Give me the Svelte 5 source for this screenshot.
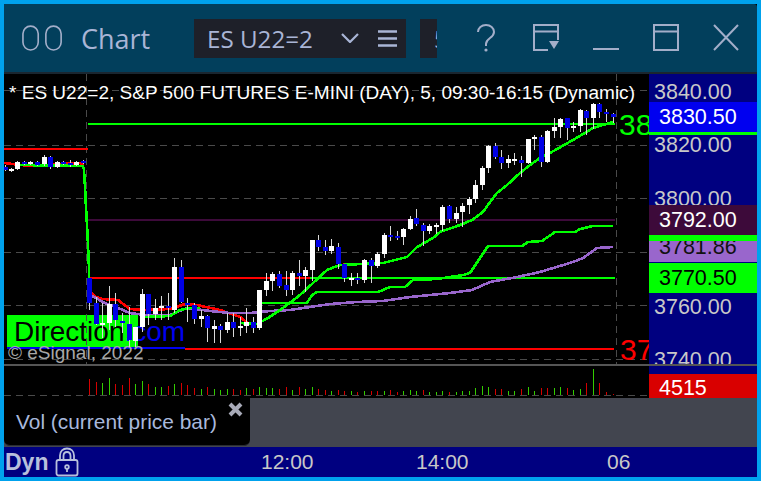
<script>
  // [x, kind (w/b), bodyTop, bodyBottom, wickTop, wickBottom]
  const candles = [
    [5,'b',167,170,165,171],[11,'w',169,171,168,172],[17,'w',162,169,161,170],[24,'b',162,164,161,165],
    [30,'w',162,164,161,165],[37,'b',162,165,161,166],[44,'w',157,164,155,166],[50,'b',157,167,156,169],
    [57,'w',162,167,161,168],[63,'b',162,164,161,165],[70,'b',163,165,160,167],[76,'w',162,165,161,166],
    [83,'b',161,163,160,164],
    [89,'b',278,303,278,310],[96,'b',303,324,297,325],[102,'w',323,325,303,338],[109,'w',304,323,286,330],
    [115,'b',304,320,293,327],[122,'b',321,323,313,333],[129,'b',324,340,307,347],[135,'w',327,341,327,347],
    [142,'w',294,327,289,332],[148,'b',294,314,294,325],[155,'w',308,314,299,320],[161,'w',306,308,296,320],
    [168,'b',306,308,293,320],[174,'w',267,310,258,313],[181,'b',267,302,260,303],[187,'b',303,305,298,322],
    [194,'b',305,319,303,324],[201,'w',316,319,310,327],[207,'b',316,328,315,342],[214,'w',326,329,320,343],
    [220,'b',326,330,324,343],[227,'w',322,330,313,333],[233,'b',322,328,313,337],[240,'w',326,328,317,336],
    [246,'w',322,326,308,333],[253,'b',322,328,317,333],[259,'w',290,328,290,330],[266,'w',281,290,273,296],
    [272,'w',274,281,272,291],[279,'b',274,286,271,288],[286,'b',285,290,271,296],[292,'w',273,290,271,295],
    [299,'b',273,276,260,286],[305,'w',270,276,267,292],[312,'w',240,270,240,281],[318,'b',240,247,235,251],
    [325,'b',247,251,240,255],[331,'w',246,251,239,254],[338,'b',247,264,243,269],[344,'b',264,278,264,282],
    [351,'w',278,280,273,286],[357,'b',278,280,273,284],[364,'w',260,280,259,283],[371,'b',260,266,258,283],
    [377,'w',254,266,252,268],[384,'w',235,254,233,258],[390,'b',235,237,226,241],[397,'b',236,238,231,240],
    [403,'w',229,237,228,245],[410,'w',219,229,216,230],[416,'b',218,224,209,226],[423,'b',225,231,223,246],
    [429,'w',226,231,224,234],[436,'w',225,227,223,234],[442,'w',207,225,205,231],[449,'b',206,219,205,223],
    [456,'w',213,219,207,223],[462,'w',206,212,203,227],[469,'w',199,205,197,214],[475,'w',185,199,180,203],
    [482,'w',168,185,166,190],[488,'w',146,168,145,173],[495,'b',146,157,143,159],[501,'b',157,163,150,169],
    [508,'w',159,163,155,168],[514,'w',159,161,153,165],[521,'b',160,163,156,177],[528,'w',139,163,139,164],
    [534,'w',137,139,135,150],[541,'b',137,162,135,167],[547,'w',131,162,130,163],[554,'w',127,131,118,138],
    [560,'w',119,127,118,138],[567,'b',118,128,118,140],[573,'w',126,128,122,132],[580,'w',110,126,109,132],
    [586,'b',111,118,110,135],[593,'w',104,118,103,129],[599,'b',104,112,103,118],[606,'b',112,114,109,122],
    [613,'b',114,117,113,123]
  ];

  const volumes = [
    [89,'r',379],[96,'r',382],[102,'g',383],[109,'g',378],[115,'r',384],[122,'r',385],[129,'r',378],[135,'g',384],
    [142,'g',381],[148,'r',384],[155,'g',387],[161,'g',387],[168,'r',386],[174,'g',384],[181,'r',383],[187,'r',385],
    [194,'r',388],[201,'g',389],[207,'r',387],[214,'g',389],[220,'g',390],[227,'g',389],[233,'r',389],[240,'r',390],
    [246,'g',388],[253,'r',389],[259,'g',387],[266,'g',388],[272,'g',388],[279,'r',389],[286,'r',387],[292,'g',390],
    [299,'r',387],[305,'g',389],[312,'g',387],[318,'r',389],[325,'r',390],[331,'g',391],[338,'r',390],[344,'r',391],
    [351,'g',391],[357,'r',392],[364,'g',391],[371,'r',391],[377,'r',391],[384,'g',391],[390,'r',390],[397,'r',392],
    [403,'g',391],[410,'g',390],[416,'g',391],[423,'r',390],[429,'g',392],[436,'g',392],[442,'g',391],[449,'r',392],
    [456,'g',392],[462,'g',391],[469,'g',391],[475,'g',388],[482,'g',386],[488,'g',387],[495,'r',389],[501,'r',389],
    [508,'g',391],[514,'g',391],[521,'r',389],[528,'g',387],[534,'g',391],[541,'r',388],[547,'r',388],[554,'g',388],
    [560,'g',387],[567,'r',388],[573,'g',390],[580,'g',389],[586,'r',383],[593,'g',369],[599,'r',383],[606,'r',392],[613,'r',394]
  ];

  const pts = (a) => a.map((p) => p.join(',')).join(' ');

  const redEarly = pts([[4,163],[20,165],[35,166],[45,165],[80,163],[84,165]]);
  const redFast = pts([[90,292],[96,297],[103,299],[118,300],[130,309],[145,310],[170,309],[185,304],[197,305],[220,310],[240,317],[248,323],[258,324]]);
  const drop = pts([[20,165],[83,166],[84,170],[85,187],[86,208],[87,225],[88,245],[89,268],[89,278]]);
  const greenLow = pts([[145,317],[170,316],[180,310],[190,308],[200,308]]);
  const ema = pts([[240,323],[257,324],[268,318],[283,308],[300,295],[313,283],[327,270],[340,265],[383,263],[407,257],[417,247],[433,238],[440,232],[460,225],[472,220],[483,212],[490,202],[497,193],[507,185],[520,173],[530,165],[540,158],[550,153],[573,140],[593,128],[613,122]]);
  const steps = pts([[260,303],[307,303],[312,295],[317,292],[378,292],[390,287],[405,287],[413,280],[437,279],[463,275],[470,273],[488,246],[522,246],[528,242],[542,241],[555,232],[575,232],[580,229],[593,226],[613,226]]);
  const purple = pts([[92,296],[105,303],[118,308],[130,313],[145,315],[170,315],[187,308],[210,311],[230,313],[250,313],[270,311],[290,310],[310,307],[330,304],[357,302],[383,301],[410,297],[450,293],[472,290],[490,282],[517,277],[540,272],[573,262],[583,258],[597,248],[613,247]]);

  const gridY = [90, 145, 198, 252, 305, 359];

  const axis = [
    { text: '3840.00', y: 92 },
    { text: '3820.00', y: 145 },
    { text: '3800.00', y: 199 },
    { text: '3760.00', y: 307 },
    { text: '3740.00', y: 360 }
  ];
  const tags = [
    { text: '3830.50', top: 102, h: 30, bg: '#0000f0', fg: '#fff' },
    { text: '3792.00', top: 205, h: 30, bg: '#3d0a3a', fg: '#fff' },
    { text: '3781.86', top: 241, h: 21, bg: '#9966cc', fg: '#111', clip: true },
    { text: '3770.50', top: 263, h: 30, bg: '#00ff00', fg: '#000' }
  ];
</script>

<div class="frame">
  <header class="title">
    <svg class="glyph dual" viewBox="0 0 44 28" aria-hidden="true">
      <rect x="1" y="1" width="16" height="25" rx="8" />
      <rect x="25" y="1" width="16" height="25" rx="8" />
    </svg>
    <span class="name">Chart</span>
    <div class="box symbol">
      <span>ES U22=2</span>
      <svg class="chev" viewBox="0 0 18 10" aria-hidden="true"><path d="M1 1l8 8 8-8" /></svg>
      <svg class="menu" viewBox="0 0 19 17" aria-hidden="true"><path d="M0 1.500h19M0 8.500h19M0 15.500h19" /></svg>
    </div>
    <div class="box interval"><span>5</span></div>
    <div class="actions">
      <svg class="glyph" viewBox="0 0 26 28" aria-hidden="true">
        <path d="M5 8c0-4 3.500-7 8-7s8 3 8 7c0 3-2 4.500-4 6s-4 3-4 6v2" />
        <circle class="dot" cx="13" cy="26" r="1.600" />
      </svg>
      <svg class="glyph" viewBox="0 0 26 28" aria-hidden="true">
        <path d="M15 26H1V1h24v15M1 7.500h24" />
        <path class="dot" d="M16 17h10l-5 8z" />
      </svg>
      <svg class="glyph" viewBox="0 0 26 28" aria-hidden="true"><path d="M0 25h26" /></svg>
      <svg class="glyph" viewBox="0 0 26 28" aria-hidden="true"><path d="M1 1h24v25H1zM1 7.500h24" /></svg>
      <svg class="glyph" viewBox="0 0 26 28" aria-hidden="true"><path d="M1 1l24 25M25 1L1 26" /></svg>
    </div>
  </header>

  <div class="divider"></div>

  <section class="pane">
    <svg class="plot" viewBox="4 74 645 290" width="645" height="290">
      <rect x="7" y="315" width="131" height="32" fill="#00ff00" />
      <text x="14" y="341" class="logo">Direction<tspan fill="#0000f0">.com</tspan></text>
      <rect x="7" y="347" width="178" height="2" fill="#0000f0" />

      {#each gridY as y}
        <line x1="4" x2="649" y1={y + 0.5} y2={y + 0.5} class="grid" />
      {/each}
      <line x1="86.500" x2="86.500" y1="74" y2="364" class="grid" />
      <line x1="616.500" x2="616.500" y1="74" y2="364" class="grid" />

      <text x="8" y="359" class="copy">© eSignal, 2022</text>

      <rect x="4" y="148" width="84" height="2" fill="#ff0000" />
      <rect x="88" y="123" width="527" height="2" fill="#00ff00" />
      <rect x="88" y="219" width="527" height="2" fill="#3d0a3a" />
      <rect x="88" y="277" width="222" height="2" fill="#ff0000" />
      <rect x="310" y="277" width="305" height="2" fill="#00ff00" />
      <rect x="185" y="348" width="429" height="2" fill="#ff0000" />
      <rect x="343" y="263" width="18" height="2" fill="#ff0000" />

      <polyline points={redEarly} class="line" stroke="#ff0000" />
      <polyline points={redFast} class="line" stroke="#ff0000" />
      <polyline points={purple} class="line" stroke="#9966cc" />
      <polyline points={steps} class="line" stroke="#00ff00" />
      <polyline points={greenLow} class="line" stroke="#00ff00" />
      <polyline points={ema} class="line" stroke="#00ff00" />
      <polyline points={drop} class="line" stroke="#00ff00" />

      {#each candles as [x, kind, top, bottom, wt, wb]}
        <line x1={x + 0.5} x2={x + 0.5} y1={wt} y2={wb} class="wick" />
        <rect x={x - 2} y={top} width="5" height={bottom - top} fill={kind === 'w' ? '#ffffff' : '#0000e6'} />
      {/each}

      <text x="9" y="99" class="heading">* ES U22=2, S&amp;P 500 FUTURES E-MINI (DAY), 5, 09:30-16:15 (Dynamic)</text>
      <text x="619" y="135" class="big" fill="#00ff00">38</text>
      <text x="620" y="360" class="big" fill="#ff0000">37</text>
    </svg>

    <div class="axis">
      {#each axis as a}
        <span class="tick" style="top:{a.y - 74 - 13}px">{a.text}</span>
      {/each}
      <div class="rule top"></div>
      <div class="rule mid"></div>
      {#each tags as t}
        <div class="tag" style="top:{t.top - 74}px;height:{t.h}px;background:{t.bg};color:{t.fg}">
          <span class:clip={t.clip}>{t.text}</span>
        </div>
      {/each}
    </div>
  </section>

  <div class="separator"></div>

  <section class="volume">
    <svg viewBox="4 366 645 32" width="645" height="32" class="vplot">
      <line x1="4" x2="649" y1="395.500" y2="395.500" class="grid" />
      {#each volumes as [x, c, y]}
        <rect x={x} y={y} width="1" height={395 - y} fill={c === 'r' ? '#d40000' : '#33cc00'} />
      {/each}
    </svg>
    <div class="vaxis"><div class="vtag">4515</div></div>
  </section>

  <section class="study">
    <div class="tip">
      <span>Vol (current price bar)</span>
      <svg class="x" viewBox="0 0 15 15" aria-hidden="true"><path d="M2 2l11 11M13 2L2 13" /></svg>
    </div>
  </section>

  <footer class="time">
    <div class="dyn">
      <b>Dyn</b>
      <svg class="lock" viewBox="0 0 24 30" aria-hidden="true">
        <path d="M5 14V8.500C5 4 8 1.500 12 1.500S19 4 19 8.500V14" />
        <path d="M8.500 14V9c0-2.500 1.500-4 3.500-4s3.500 1.500 3.500 4v5" />
        <rect x="1.500" y="13" width="21" height="15.500" rx="2" />
        <circle cx="12" cy="20" r="1.800" />
        <path d="M12 21v4" />
      </svg>
    </div>
    <span class="t t1">12:00</span>
    <span class="t t2">14:00</span>
    <span class="t t3">06</span>
  </footer>
</div>

<style>
  :global(body) { margin: 0; background: #000; }
  .frame {
    width: 761px;
    height: 481px;
    box-sizing: border-box;
    border: 4px solid #00a2ed;
    display: flex;
    flex-direction: column;
    overflow: hidden;
    font-family: "Liberation Sans", Arial, sans-serif;
    background: #000;
  }
  .title {
    height: 68px;
    flex: none;
    background: #023f5c;
    border-top-right-radius: 3px;
    display: flex;
    align-items: center;
    color: #a9b5d6;
    font-family: "Open Sans", "Noto Sans", sans-serif;
    box-sizing: border-box;
    padding-left: 18px;
  }
  .glyph { width: 26px; height: 28px; flex: none; fill: none; stroke: #a3aec9; stroke-width: 2; }
  .glyph.dual { width: 42px; height: 27px; stroke-width: 1.700; }
  .glyph .dot { fill: #a3aec9; stroke: none; }
  .name { font-size: 27px; margin-left: 17px; width: 113px; }
  .box { background: #1e2029; height: 39px; display: flex; align-items: center; box-sizing: border-box; }
  .symbol { width: 212px; padding-left: 13px; font-size: 24.200px; }
  .symbol span { width: 134px; flex: none; }
  .chev { width: 18px; height: 10px; fill: none; stroke: #a9b5d6; stroke-width: 2.200; }
  .menu { width: 19px; height: 17px; margin-left: 19px; fill: none; stroke: #a9b5d6; stroke-width: 2.400; }
  .interval { width: 17px; margin-left: 14px; overflow: hidden; font-size: 24.200px; padding-left: 14px; }
  .actions { display: flex; gap: 34px; margin-left: 36px; }
  .divider { height: 2px; flex: none; background: #1a2630; }
  .pane { height: 290px; flex: none; display: flex; }
  .plot { display: block; flex: none; }
  .grid { stroke: #4a4a4a; stroke-width: 1; stroke-dasharray: 7 5; }
  .line { fill: none; stroke-width: 2.600; shape-rendering: crispEdges; }
  .wick { stroke: #d8d8d8; stroke-width: 1; shape-rendering: crispEdges; }
  .logo { font: 28px "Liberation Sans", Arial, sans-serif; fill: #000; }
  .copy { font: 19px "Liberation Sans", Arial, sans-serif; fill: #a8a8a8; }
  .heading { font: 19.050px "Liberation Sans", Arial, sans-serif; fill: #fff; }
  .big { font: 30px "Liberation Sans", Arial, sans-serif; }
  .axis { position: relative; flex: 1; background: #000080; overflow: hidden; }
  .tick { position: absolute; left: 5px; font-size: 21.500px; line-height: 26px; color: #c8c8c8; }
  .tag { position: absolute; left: 0; right: 0; font-size: 21.500px; line-height: 30px; padding-left: 10px; overflow: hidden; }
  .tag .clip { display: block; margin-top: -9px; }
  .rule { position: absolute; left: 0; right: 0; background: #00ff00; }
  .rule.top { top: 58px; height: 3px; }
  .rule.mid { top: 161px; height: 6px; }
  .separator { height: 2px; flex: none; background: #555; }
  .volume { height: 32px; flex: none; display: flex; }
  .vplot { display: block; flex: none; }
  .vaxis { flex: 1; background: #000080; padding-top: 8px; box-sizing: border-box; }
  .vtag { height: 24px; background: #d90000; color: #fff; font-size: 21.500px; line-height: 28px; padding-left: 10px; overflow: hidden; }
  .study { height: 49px; flex: none; background: #42454f; }
  .tip {
    width: 246px;
    height: 48px;
    box-sizing: border-box;
    background: #000;
    border-radius: 0 0 6px 6px;
    border-bottom: 1px solid #2a2c33;
    position: relative;
    color: #a8b8dc;
    font-size: 20.900px;
    line-height: 48px;
    padding-left: 12px;
  }
  .x { position: absolute; left: 224px; top: 4px; width: 15px; height: 15px; fill: none; stroke: #a8aab8; stroke-width: 4; }
  .time { flex: 1; background: #000080; position: relative; color: #c8c8c8; font-size: 21px; display: flex; align-items: center; }
  .dyn { display: flex; align-items: center; margin-left: 1px; gap: 7px; color: #b8c0dc; font-size: 23px; }
  .lock { width: 24px; height: 30px; fill: none; stroke: #b8c0dc; stroke-width: 1.800; }
  .t { position: absolute; }
  .t1 { left: 257px; }
  .t2 { left: 412px; }
  .t3 { left: 603px; }
</style>
